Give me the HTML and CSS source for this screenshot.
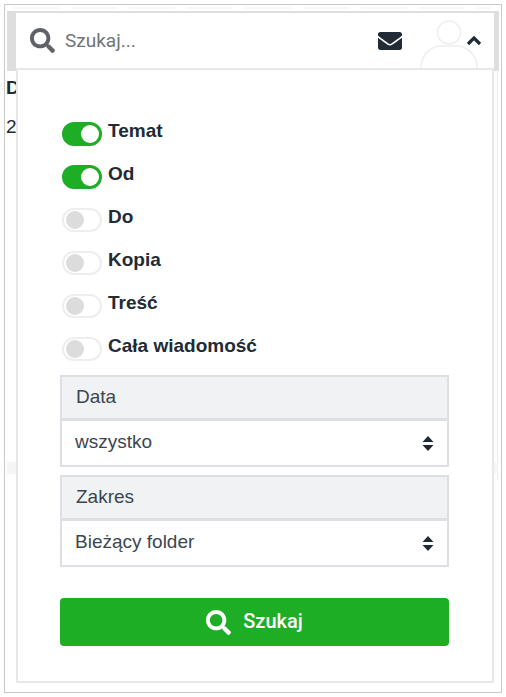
FILE: index.html
```html
<!DOCTYPE html>
<html lang="pl">
<head>
<meta charset="utf-8">
<title>Szukaj</title>
<link rel="stylesheet" href="styles.css">
</head>
<body>
<div class="frame">
  <div class="backdrop">
    <div class="noise"></div>
    <div class="strip"></div>
    <p class="bg-line bg-bold">D</p>
    <p class="bg-line">2</p>
    <div class="bg-rail"></div>
    <div class="bg-tick"></div>
  </div>
  <div class="panel">
    <header class="head">
      <svg class="ico-search" viewBox="0 0 512 512"><path fill="#5f6367" d="M505 442.700L405.300 343c-4.500-4.500-10.600-7-17-7H372c27.600-35.300 44-79.700 44-128C416 93.100 322.900 0 208 0S0 93.100 0 208s93.100 208 208 208c48.300 0 92.700-16.400 128-44v16.300c0 6.400 2.500 12.500 7 17l99.700 99.700c9.400 9.400 24.600 9.400 33.900 0l28.300-28.300c9.400-9.400 9.400-24.600.1-34zM208 336c-70.700 0-128-57.200-128-128 0-70.700 57.200-128 128-128 70.700 0 128 57.200 128 128 0 70.700-57.200 128-128 128z"/></svg>
      <span class="placeholder">Szukaj...</span>
      <svg class="ico-mail" viewBox="0 0 512 512"><path fill="#212b36" d="M502.300 190.800c3.900-3.100 9.700-.2 9.700 4.700V400c0 26.500-21.500 48-48 48H48c-26.500 0-48-21.500-48-48V195.600c0-5 5.700-7.800 9.700-4.700 22.400 17.400 52.100 39.500 154.100 113.600 21.100 15.400 56.700 47.800 92.200 47.600 35.700.3 72-32.800 92.300-47.600 102-74.100 131.600-96.300 154-113.700zM256 320c23.200.4 56.600-29.200 73.400-41.400 132.700-96.300 142.800-104.700 173.400-128.700 5.800-4.500 9.200-11.500 9.200-18.900v-19c0-26.500-21.500-48-48-48H48C21.500 64 0 85.500 0 112v19c0 7.400 3.400 14.300 9.200 18.900 30.600 23.900 40.700 32.400 173.400 128.700 16.800 12.200 50.200 41.800 73.400 41.400z"/></svg>
      <svg class="ico-user" viewBox="0 0 60 50"><circle cx="30" cy="12.500" r="11.500" fill="none" stroke="#eeeeee" stroke-width="1.500"/><path d="M2 48C2 33 14 26 22 26h16c8 0 20 7 20 22" fill="none" stroke="#eeeeee" stroke-width="1.500"/></svg>
      <svg class="ico-chev" viewBox="0 0 16 11"><path d="M2 9l6-6 6 6" fill="none" stroke="#212b36" stroke-width="3.200"/></svg>
    </header>
    <form class="body">
      <ul class="toggles">
        <li class="row"><span class="sw on"></span><span class="lab">Temat</span></li>
        <li class="row"><span class="sw on"></span><span class="lab">Od</span></li>
        <li class="row"><span class="sw"></span><span class="lab">Do</span></li>
        <li class="row"><span class="sw"></span><span class="lab">Kopia</span></li>
        <li class="row"><span class="sw"></span><span class="lab">Treść</span></li>
        <li class="row"><span class="sw"></span><span class="lab">Cała wiadomość</span></li>
      </ul>
      <div class="group">
        <div class="g-label">Data</div>
        <div class="g-select"><span>wszystko</span><svg class="sort" viewBox="0 0 12 15"><path fill="#212b36" d="M6 0l5.500 6H.5zM6 15L.5 9h11z"/></svg></div>
      </div>
      <div class="group">
        <div class="g-label">Zakres</div>
        <div class="g-select"><span>Bieżący folder</span><svg class="sort" viewBox="0 0 12 15"><path fill="#212b36" d="M6 0l5.500 6H.5zM6 15L.5 9h11z"/></svg></div>
      </div>
      <button class="go" type="button">
        <svg class="ico-go" viewBox="0 0 512 512"><path fill="#fff" d="M505 442.700L405.300 343c-4.500-4.500-10.600-7-17-7H372c27.600-35.300 44-79.700 44-128C416 93.100 322.900 0 208 0S0 93.100 0 208s93.100 208 208 208c48.300 0 92.700-16.400 128-44v16.300c0 6.400 2.500 12.500 7 17l99.700 99.700c9.400 9.400 24.600 9.400 33.900 0l28.300-28.300c9.400-9.400 9.400-24.600.1-34zM208 336c-70.700 0-128-57.200-128-128 0-70.700 57.200-128 128-128 70.700 0 128 57.200 128 128 0 70.700-57.200 128-128 128z"/></svg>
        <span class="go-text">Szukaj</span>
      </button>
    </form>
  </div>
</div>
</body>
</html>
```

FILE: styles.css
```css
* { box-sizing: border-box; }
html, body { margin: 0; padding: 0; background: #fff; }
body { font-family: "Liberation Sans", Arial, sans-serif; color: #212b36; }
.frame {
  position: relative;
  margin: 4px 0 0 4px;
  width: 498px;
  height: 689px;
  border: 1px solid #c9c9c9;
  overflow: hidden;
}
.backdrop { height: 100%; padding-top: 2px; }
.noise {
  height: 2px;
  margin: 0 0 2px 8px;
  width: 478px;
  background: repeating-linear-gradient(90deg, #f7f7f7 0 46px, #fff 46px 58px);
}
.strip { height: 60px; background: #dedede; margin: 0 0 0 2px; width: 492px; }
.bg-line { margin: 0; padding-left: 1px; font-size: 19px; line-height: 20px; height: 39px; color: #212b36; }
.bg-line:first-of-type { margin-top: 7px; }
.bg-bold { font-weight: 700; }
.bg-rail { position: absolute; left: 492px; top: 65px; width: 1px; height: 410px; background: #ececec; }
.bg-tick { position: absolute; left: 2px; top: 457px; width: 9px; height: 12px; background: #f5f5f5; }
.bg-tick::after { content: ""; position: absolute; left: 487px; top: 0; width: 4px; height: 12px; background: #f5f5f5; }
.panel {
  position: absolute;
  left: 11px;
  top: 8px;
  width: 478px;
  height: 670px;
  background: #fff;
  border: solid #e8e8e8;
  border-width: 0 2px 2px 2px;
}
.head {
  display: flex;
  align-items: center;
  height: 57px;
  margin: 0 -2px;
  padding: 0 12px 0 14px;
  background: #fff;
  border-bottom: 2px solid #e8e8e8;
  position: relative;
}
.ico-search { width: 25px; height: 25px; flex: none; }
.placeholder { margin-left: 10px; font-size: 19px; color: #6f7479; font-family: Roboto, sans-serif; flex: 1; }
.ico-mail { width: 24px; height: 24px; flex: none; margin-right: 64px; }
.ico-user { position: absolute; left: 403px; top: 7px; width: 60px; height: 50px; }
.ico-chev { width: 16px; height: 11px; flex: none; position: relative; }
.body { padding: 51px 43px 0 42px; }
.toggles { list-style: none; margin: 0; padding: 0; }
.row { display: flex; align-items: flex-start; height: 43px; }
.sw {
  position: relative;
  flex: none;
  width: 40px;
  height: 24px;
  margin-left: 2px;
  margin-top: 1px;
  border-radius: 12px;
  border: 2px solid #eeeeee;
  background: #fff;
}
.sw::after {
  content: "";
  position: absolute;
  left: 2px;
  top: 1px;
  width: 18px;
  height: 18px;
  border-radius: 50%;
  background: #dcdcdc;
}
.sw.on { background: #1eae26; border-color: #1eae26; }
.sw.on::after { left: 17px; background: #fff; }
.lab { margin-left: 6px; font-size: 19px; font-weight: 700; line-height: 19px; }
.group { margin-bottom: 8px; font-size: 19px; color: #3b4650; }
.row:last-child { height: 39px; }
.g-label, .g-select {
  display: flex;
  align-items: center;
  justify-content: space-between;
  border: 2px solid #dcdfe3;
  padding: 0 14px 2px;
}
.g-label { height: 45px; background: #f1f2f4; }
.g-select { height: 48px; margin-top: -1px; background: #fff; padding: 0 13px 2px 13px; }
.sort { width: 12px; height: 15px; margin-top: 2px; }
.go {
  display: flex;
  align-items: center;
  justify-content: center;
  gap: 12px;
  width: 100%;
  height: 48px;
  margin-top: 31px;
  background: #1eae26;
  border: 0;
  border-radius: 4px;
  color: #fff;
  font: 500 20px Roboto, sans-serif;
}
.go-text { margin-bottom: 3px; }
.ico-go { width: 25px; height: 25px; }
```
